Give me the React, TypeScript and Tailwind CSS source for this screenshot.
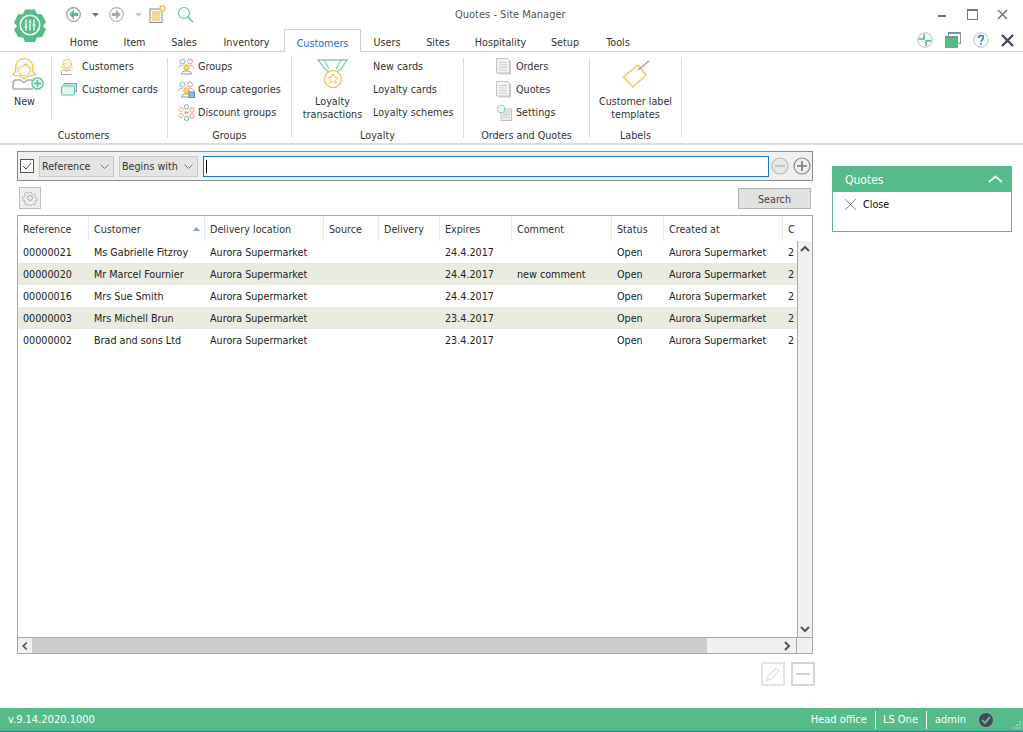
import React from "react";

const Logo = () => (
  <svg width="34" height="34" viewBox="0 0 34 34">
    <path d="M12 1.500h10l2 4.500 5 .5 4 8-3 3.500 3 3.500-4 7.500-5 .5-2 4.500H12l-2-4.500-5-.5-4-7.500 3-3.500-3-3.500 4-8 5-.5z" fill="#55bb8b" />
    <circle cx="17" cy="17" r="10.500" fill="#fff" />
    <circle cx="17" cy="17" r="9" fill="#55bb8b" />
    <path d="M13 11.500v11M17 11.500v11M21 11.500v11" stroke="#fff" strokeWidth="1.300" />
    <path d="M11.500 19h3M15.500 14h3M19.500 17h3" stroke="#fff" strokeWidth="1.700" />
  </svg>
);

const NavBtn = ({ color, dim }: { color: string; dim?: boolean }) => (
  <svg width="15" height="15" viewBox="0 0 16 16">
    <circle cx="8" cy="8" r="7.300" fill="#fff" stroke={dim ? "#b5b5b5" : "#999"} strokeWidth="1.200" />
    <path d="M13 6.300H8.500V3L3.500 8l5 5V9.700H13z" fill={color} transform={dim ? "rotate(180 8 8)" : undefined} />
  </svg>
);

const Caret = ({ c }: { c: string }) => (
  <svg width="7" height="4" viewBox="0 0 7 4"><path d="M0 0h7L3.500 4z" fill={c} /></svg>
);

const Note = () => (
  <svg width="17" height="19" viewBox="0 0 17 19">
    <rect x="1" y="4" width="12" height="13.500" fill="#fff8e6" stroke="#8b8b8b" />
    <path d="M3 7h8M3 9h8M3 11h8M3 13h8M3 15h8" stroke="#e4b24f" />
    <circle cx="13.500" cy="3.500" r="2.500" fill="#fff" stroke="#eec15c" strokeWidth="1.500" />
  </svg>
);

const Search = () => (
  <svg width="17" height="17" viewBox="0 0 17 17" fill="none">
    <circle cx="7" cy="7" r="5.500" stroke="#62c39a" strokeWidth="1.200" />
    <path d="M11 11l5 5" stroke="#62c39a" strokeWidth="1.400" />
  </svg>
);

const Woman = ({ size, sw = 1.200 }: { size: number; sw?: number }) => (
  <svg width={size} height={size} viewBox="0 0 32 32" fill="none">
    <path d="M12 .7C6.500.7 3.500 4.500 3.800 9.500 4 13 2.800 15 1 16.500c2 1.500 4.500 1.500 6.500 1 1.500 2.200 3 3.200 4.500 3.200s3.500-1 4.800-3.200c2 .5 4.500.5 6.700-1-1.800-1.500-3-3.500-2.800-7C21 4.500 17.500.7 12 .7z" stroke="#f2bf4e" strokeWidth={sw} fill="#fff" />
    <path d="M5.500 10C9 10 12 8.500 13.500 5.500 14.500 8 16.500 9.500 18.800 10M5.500 10c0 4 3 8 6.500 8s6.800-4 6.800-8" stroke="#f2bf4e" strokeWidth={sw * 0.9} />
    <path d="M1 31v-5.500c0-2.500 1.500-3.500 3.500-3.500h3.500l4 2.500 4-2.500h4" stroke="#a8a8a8" strokeWidth={sw + 0.2} />
    <path d="M1 31h20" stroke="#a8a8a8" strokeWidth={sw + 0.2} />
  </svg>
);

const NewIcon = () => (
  <div className="relative h-[32px] w-[31px]">
    <Woman size={32} />
    <svg width="13" height="13" viewBox="0 0 13 13" className="absolute bottom-[0px] right-[-1px]">
      <circle cx="6.500" cy="6.500" r="5.600" fill="#e4f6ee" stroke="#55bb8b" strokeWidth="1.300" />
      <path d="M3 6.500h7M6.500 3v7" stroke="#55bb8b" strokeWidth="1.400" />
    </svg>
  </div>
);

const Card = () => (
  <svg width="16" height="13" viewBox="0 0 16 13" fill="none">
    <rect x="3" y="0.500" width="12.500" height="8" fill="#cfe7f1" stroke="#6fa9c0" />
    <rect x="0.500" y="3" width="13" height="9" rx="1" fill="#e2f5ec" stroke="#62c39a" />
  </svg>
);

const People = ({ extra }: { extra?: boolean }) => (
  <svg width="17" height="17" viewBox="0 0 17 17" fill="none">
    <circle cx="4.500" cy="3.500" r="2.500" stroke="#7fb0d3" />
    <circle cx="12" cy="3.500" r="2.500" stroke="#e79393" />
    <path d="M0.500 10c0-2 2-2.500 4-2.500M16 10c0-2-2-2.500-4-2.500" stroke="#aaa" />
    <circle cx="8.500" cy="9.500" r="2.800" fill="#f9d36f" stroke="#e6b33e" />
    <path d="M3.500 16c0-2 2-3 5-3s5 1 5 3z" fill="#fff" stroke="#999" />
    {extra && <rect x="11" y="11" width="5.500" height="5.500" fill="#8fb9d6" stroke="#5d90b3" />}
  </svg>
);

const Discount = () => (
  <svg width="17" height="17" viewBox="0 0 17 17" fill="none">
    <circle cx="8.500" cy="2.800" r="2.200" stroke="#7fb0d3" />
    <circle cx="14" cy="6" r="2.200" stroke="#e79393" />
    <circle cx="14" cy="12" r="2.200" stroke="#e79393" />
    <circle cx="8.500" cy="14.500" r="2.200" stroke="#62c39a" />
    <circle cx="3" cy="11.500" r="2.200" stroke="#f4c55b" />
    <circle cx="3" cy="5.500" r="2.200" stroke="#f4c55b" />
    <path d="M6.500 8.500h4" stroke="#aaa" strokeWidth="2" />
  </svg>
);

const Medal = () => (
  <svg width="32" height="32" viewBox="0 0 32 32" fill="none">
    <path d="M1 1h29l-6 9-8 6-8-6z" stroke="#7ed0ac" strokeWidth="1.300" />
    <path d="M7 1l5 9M24 1l-5 9" stroke="#7ed0ac" strokeWidth="1.100" />
    <circle cx="16" cy="20" r="8.500" fill="#fff" stroke="#f4c55b" strokeWidth="1.300" />
    <path d="M16 15l1.500 3.200 3.500.4-2.600 2.300.8 3.400-3.200-1.800-3.200 1.800.8-3.400-2.600-2.300 3.500-.4z" stroke="#f4c55b" />
  </svg>
);

const Doc = () => (
  <svg width="16" height="17" viewBox="0 0 16 17" fill="none">
    <path d="M2 2.500h13v14H3z" fill="#cfcfcf" />
    <path d="M.5.500h11.500l1.500 2v12.500H.5z" fill="#f2f2f2" stroke="#c4c4c4" />
    <path d="M3 4.500h8M3 7h8M3 9.500h8M3 12h8" stroke="#cfcfcf" />
  </svg>
);

const DocGear = () => (
  <svg width="16" height="17" viewBox="0 0 16 17" fill="none">
    <rect x="5" y="5" width="10.500" height="11.500" fill="#ececec" stroke="#c4c4c4" />
    <path d="M7 8h7M7 10.500h7M7 13h7" stroke="#c9c9c9" />
    <circle cx="5" cy="5" r="3.800" fill="#dff5ea" stroke="#62c39a" strokeDasharray="2 1" />
  </svg>
);

const Tag = () => (
  <svg width="28" height="28" viewBox="0 0 28 28" fill="none">
    <path d="M16 5l8 10-13 12L1.500 17z" stroke="#f4c55b" strokeWidth="1.500" strokeLinejoin="round" />
    <path d="M16 10L27 1" stroke="#9a9a9a" strokeWidth="1.200" />
  </svg>
);

const SmallItem = ({ icon, label, w }: { icon?: React.ReactNode; label: string; w?: string }) => (
  <div className="flex h-[23px] items-center">
    {icon && <span className={`flex items-center justify-center ${w ?? "w-[20px]"}`}>{icon}</span>}
    <span className="whitespace-nowrap pt-[2px]">{label}</span>
  </div>
);

const Group = ({ w, label, children }: { w: string; label: string; children: React.ReactNode }) => (
  <div className={`flex h-[80px] flex-col border-r border-[#d9d9d9] ${w}`}>
    <div className="flex flex-1">{children}</div>
    <div className="mb-[-5px] text-center leading-[14px] text-[#333]">{label}</div>
  </div>
);

const tabs: [string, string][] = [
  ["Home", "w-[52px]"], ["Item", "w-[49px]"], ["Sales", "w-[50px]"], ["Inventory", "w-[75px]"], ["Customers", "w-[77px]"],
  ["Users", "w-[52px]"], ["Sites", "w-[50px]"], ["Hospitality", "w-[75px]"], ["Setup", "w-[54px]"], ["Tools", "w-[52px]"],
];

const cols: [string, string][] = [
  ["Reference", "w-[71px]"], ["Customer", "w-[116px]"], ["Delivery location", "w-[119px]"], ["Source", "w-[55px]"], ["Delivery", "w-[61px]"],
  ["Expires", "w-[72px]"], ["Comment", "w-[100px]"], ["Status", "w-[52px]"], ["Created at", "w-[119px]"], ["C", "w-[14px]"],
];

const rows = [
  ["00000021", "Ms Gabrielle Fitzroy", "24.4.2017", "", "2"],
  ["00000020", "Mr Marcel Fournier", "24.4.2017", "new comment", "2"],
  ["00000016", "Mrs Sue Smith", "24.4.2017", "", "2"],
  ["00000003", "Mrs Michell Brun", "23.4.2017", "", "2"],
  ["00000002", "Brad and sons Ltd", "23.4.2017", "", "2"],
];

const Chev = ({ d }: { d: string }) => (
  <svg width="16" height="16" viewBox="0 0 16 16"><path d={d} fill="none" stroke="#555" strokeWidth="2" /></svg>
);

const Select = ({ label, w }: { label: string; w: string }) => (
  <div className={`flex h-[21px] items-center justify-between border border-[#c8c8c8] bg-[#e4e4e4] px-[2px] ${w}`}>
    <span className="pt-[2px]">{label}</span>
    <svg width="9" height="5" viewBox="0 0 9 5" className="mr-[2px]"><path d="M.5.500l4 4 4-4" fill="none" stroke="#777" /></svg>
  </div>
);

export default function App() {
  return (
    <div className="flex h-[732px] w-[1023px] flex-col overflow-hidden bg-white text-[10.7px] text-[#333] [font-family:'DejaVu_Sans_Condensed','Liberation_Sans',sans-serif]">
      {/* Header */}
      <div className="flex h-[52px] border-b border-[#d0d0d0]">
        <div className="flex w-[58px] justify-start pl-[13px] pt-[8px]"><Logo /></div>
        <div className="flex flex-1 flex-col">
          <div className="flex h-[30px] items-start">
            <div className="flex w-[397px] items-center pl-[8px] pt-[5px]">
              <NavBtn color="#55bb8b" />
              <span className="ml-[11px]"><Caret c="#777" /></span>
              <span className="ml-[10px]"><NavBtn color="#aaa" dim /></span>
              <span className="ml-[11px]"><Caret c="#ccc" /></span>
              <span className="ml-[7px]"><Note /></span>
              <span className="ml-[11px]"><Search /></span>
            </div>
            <div className="pt-[7px] text-[11px] text-[#555]">Quotes - Site Manager</div>
            <div className="ml-auto flex items-center gap-[19px] pr-[15px] pt-[9px]">
              <svg width="11" height="2" className="mt-[2px]"><rect width="8" height="2" x="1" fill="#777" /></svg>
              <svg width="11" height="11"><rect x="0.500" y="0.500" width="10" height="10" fill="none" stroke="#777" /><rect width="11" height="2" fill="#777" /></svg>
              <svg width="11" height="11"><path d="M1 1l9 9M10 1l-9 9" stroke="#777" strokeWidth="1.600" /></svg>
            </div>
          </div>
          <div className="flex h-[22px] items-end">
            {tabs.map(([t, w]) => (
              <div key={t} className={`flex items-center justify-center pt-[6px] ${w} ${t === "Customers" ? "mb-[-1px] h-[23px] border border-b-0 border-[#d0d0d0] bg-white text-[#1a75c4]" : "h-[22px]"}`}>{t}</div>
            ))}
            <div className="ml-auto flex items-center pb-[3px] pr-[9px]">
              <svg width="16" height="16" viewBox="0 0 16 16" fill="none" className="mr-[12px]">
                <circle cx="8" cy="8" r="7.200" stroke="#bbb" />
                <path d="M7 2v5H2M9 14V9h5" stroke="#6fcba4" strokeWidth="2" />
              </svg>
              <svg width="16" height="16" viewBox="0 0 16 16" className="mr-[12px]">
                <rect x="3.500" y="0.500" width="12" height="11" fill="#fff" stroke="#8a9aa5" />
                <rect x="3" y="0" width="13" height="2" fill="#6d97ad" />
                <rect x="0" y="5" width="13" height="11" fill="#55bb8b" />
                <rect x="0" y="4" width="13" height="2" fill="#888" />
              </svg>
              <svg width="16" height="16" viewBox="0 0 16 16" fill="none" className="mr-[12px]">
                <circle cx="8" cy="8" r="7.200" stroke="#bbb" />
                <path d="M5.500 6c0-1.500 1-2.500 2.500-2.500s2.500 1 2.500 2.300c0 2-2.500 2-2.500 4" stroke="#1f7fa8" strokeWidth="1.500" />
                <rect x="7.200" y="11" width="1.600" height="1.800" fill="#1f7fa8" />
              </svg>
              <svg width="13" height="13" viewBox="0 0 13 13"><path d="M1 1l11 11M12 1L1 12" stroke="#3f4b57" strokeWidth="2.400" /></svg>
            </div>
          </div>
        </div>
      </div>

      {/* Ribbon */}
      <div className="flex h-[93px] shrink-0 border-b-2 border-[#dcdcdc] pt-[6px]">
        <Group w="w-[168px]" label="Customers">
          <div className="flex h-[60px] w-[52px] flex-col items-start border-r border-[#d9d9d9] pl-[12px]">
            <NewIcon />
            <span className="ml-[2px] mt-[5px] leading-[14px]">New</span>
          </div>
          <div className="mt-[-3px] pl-[9px]">
            <SmallItem icon={<Woman size={16} sw={1.800} />} label="Customers" w="w-[21px] justify-start" />
            <SmallItem icon={<Card />} label="Customer cards" w="w-[21px] justify-start" />
          </div>
        </Group>
        <Group w="w-[124px]" label="Groups">
          <div className="mt-[-3px] pl-[10px]">
            <SmallItem icon={<People />} label="Groups" w="w-[20px] justify-start" />
            <SmallItem icon={<People extra />} label="Group categories" w="w-[20px] justify-start" />
            <SmallItem icon={<Discount />} label="Discount groups" w="w-[20px] justify-start" />
          </div>
        </Group>
        <Group w="w-[172px]" label="Loyalty">
          <div className="flex w-[81px] flex-col items-center pt-[1px]">
            <Medal />
            <div className="mt-[4px] text-center leading-[13px]">Loyalty<br />transactions</div>
          </div>
          <div className="mt-[-3px]">
            <SmallItem label="New cards" />
            <SmallItem label="Loyalty cards" />
            <SmallItem label="Loyalty schemes" />
          </div>
        </Group>
        <Group w="w-[126px]" label="Orders and Quotes">
          <div className="mt-[-3px] pl-[32px]">
            <SmallItem icon={<Doc />} label="Orders" w="w-[20px] justify-start" />
            <SmallItem icon={<Doc />} label="Quotes" w="w-[20px] justify-start" />
            <SmallItem icon={<DocGear />} label="Settings" w="w-[20px] justify-start" />
          </div>
        </Group>
        <Group w="w-[92px]" label="Labels">
          <div className="flex w-full flex-col items-center pt-[2px]">
            <Tag />
            <div className="mt-[7px] text-center leading-[13px]">Customer label<br />templates</div>
          </div>
        </Group>
      </div>

      {/* Body */}
      <div className="flex flex-1">
        <div className="ml-[17px] mt-[6px] flex w-[798px] flex-col">
          <div className="flex h-[30px] w-[796px] items-center border border-[#8a8a8a] bg-[#f0f0f0] pl-[2px]">
            <span className="flex h-[14px] w-[14px] items-center justify-center border border-[#555] bg-white">
              <svg width="10" height="8" viewBox="0 0 10 8"><path d="M1 4l3 3 5-6" fill="none" stroke="#444" strokeWidth="1" /></svg>
            </span>
            <Select label="Reference" w="ml-[5px] w-[75px]" />
            <Select label="Begins with" w="ml-[5px] w-[79px]" />
            <div className="ml-[5px] flex h-[21px] w-[566px] items-center border border-[#1a75c4] bg-white pl-[2px]">
              <span className="h-[13px] w-px bg-black" />
            </div>
            <svg width="18" height="18" viewBox="0 0 18 18" fill="none" className="ml-[2px]"><circle cx="9" cy="9" r="8" fill="#e8e8e8" stroke="#bbb" strokeWidth="1.200" /><path d="M4 9h10" stroke="#bbb" strokeWidth="1.600" /></svg>
            <svg width="18" height="18" viewBox="0 0 18 18" fill="none" className="ml-[4px]"><circle cx="9" cy="9" r="8" fill="#efefef" stroke="#888" strokeWidth="1.200" /><path d="M4 9h10M9 4v10" stroke="#777" strokeWidth="1.600" /></svg>
          </div>
          <div className="flex h-[34px] w-[794px] items-center justify-between pl-[2px]">
            <div className="flex h-[22px] w-[22px] items-center justify-center border border-[#bcbcbc] bg-[#eeeeee]">
              <svg width="16" height="16" viewBox="0 0 16 16" fill="none">
                <circle cx="8" cy="8" r="2.500" stroke="#aaa" />
                <path d="M6.800 1h2.400l.4 2 1.700.8 1.800-1 1.600 1.600-1 1.800.8 1.700 2 .4v2.400l-2 .4-.8 1.700 1 1.800-1.600 1.600-1.800-1-1.700.8-.4 2H6.800l-.4-2-1.700-.8-1.800 1-1.600-1.600 1-1.800-.8-1.700-2-.4V6.800l2-.4.800-1.700-1-1.800 1.600-1.600 1.800 1 1.700-.8z" stroke="#aaa" transform="translate(1.300 1.300) scale(.84)" />
              </svg>
            </div>
            <div className="mt-[1px] flex h-[21px] w-[73px] items-center justify-center border border-[#b5b5b5] bg-[#e1e1e1] pt-[3px] text-[#444]">Search</div>
          </div>
          <div className="flex h-[439px] w-[796px] flex-col border border-[#a8a8a8]">
            <div className="flex h-[25px] shrink-0 items-stretch">
              {cols.map(([c, w], i) => (
                <div key={c} className={`relative flex shrink-0 items-center overflow-hidden pl-[5px] pt-[4px] ${w} ${i < 9 ? "border-r border-[#e2ecf5]" : ""}`}>
                  {c}
                  {c === "Customer" && (
                    <svg width="7" height="4" viewBox="0 0 7 4" className="absolute right-[4px] top-[11px]"><path d="M0 4h7L3.500 0z" fill="#7fa6c5" /></svg>
                  )}
                </div>
              ))}
            </div>
            <div className="flex flex-1 overflow-hidden">
              <div className="flex w-[779px] flex-col overflow-hidden">
                {rows.map((r, i) => (
                  <div key={r[0]} className={`flex h-[22px] shrink-0 items-center whitespace-nowrap pt-[2px] text-[#222] ${i % 2 ? "bg-[#e9ebe1]" : "bg-white"}`}>
                    <span className="w-[71px] shrink-0 pl-[5px]">{r[0]}</span>
                    <span className="w-[116px] shrink-0 pl-[5px]">{r[1]}</span>
                    <span className="w-[119px] shrink-0 pl-[5px]">Aurora Supermarket</span>
                    <span className="w-[116px] shrink-0" />
                    <span className="w-[72px] shrink-0 pl-[5px]">{r[2]}</span>
                    <span className="w-[100px] shrink-0 pl-[5px]">{r[3]}</span>
                    <span className="w-[52px] shrink-0 pl-[5px]">Open</span>
                    <span className="w-[119px] shrink-0 pl-[5px]">Aurora Supermarket</span>
                    <span className="w-[14px] shrink-0 pl-[5px]">{r[4]}</span>
                  </div>
                ))}
              </div>
              <div className="mt-[-2px] flex w-[15px] flex-col items-center border-l border-t border-[#a8a8a8] bg-[#f0f0f0] pt-[1px]">
                <Chev d="M4 10l4-4 4 4" />
                <div className="flex-1" />
                <Chev d="M4 6l4 4 4-4" />
              </div>
            </div>
            <div className="flex h-[16px] shrink-0 border-t border-[#a8a8a8] bg-[#f0f0f0]">
              <div className="flex w-[14px] items-center justify-center"><Chev d="M10 4L6 8l4 4" /></div>
              <div className="w-[675px] bg-[#cdcdcd]" />
              <div className="flex flex-1 items-center justify-end pr-[1px]"><Chev d="M6 4l4 4-4 4" /></div>
              <div className="w-[16px] border-l border-[#a8a8a8]" />
            </div>
          </div>
          <div className="mt-[8px] flex w-[798px] justify-end gap-[6px]">
            <div className="flex h-[24px] w-[24px] items-center justify-center border-2 border-[#e4e4e4]">
              <svg width="16" height="16" viewBox="0 0 16 16" fill="none"><path d="M1.500 14.500l1-4L11 2l3 3-8.500 8.500z" stroke="#d2d2d2" /></svg>
            </div>
            <div className="flex h-[24px] w-[24px] items-center justify-center border-2 border-[#d6d6d6]">
              <div className="h-[2px] w-[14px] bg-[#cfcfcf]" />
            </div>
          </div>
        </div>
        <div className="ml-[17px] mt-[21px] h-[66px] w-[180px]">
          <div className="flex h-[26px] items-center justify-between bg-[#55bb8b] pl-[13px] pr-[9px] text-[12px] text-white">
            <span className="pt-[2px]">Quotes</span>
            <svg width="15" height="8" viewBox="0 0 15 8"><path d="M1 7l6.500-5.500L14 7" fill="none" stroke="#fff" strokeWidth="2" /></svg>
          </div>
          <div className="flex h-[40px] items-start border border-t-0 border-[#55bb8b] pl-[11px] pt-[5px] text-[#111]">
            <svg width="13" height="13" viewBox="0 0 13 13" className="mt-[1px]"><path d="M1 1l11 11M12 1L1 12" stroke="#8a8a8a" strokeWidth="1" /></svg>
            <span className="ml-[6px]">Close</span>
          </div>
        </div>
      </div>

      {/* Status bar */}
      <div className="relative flex h-[24px] shrink-0 items-center border-b border-[#1a75c4] bg-[#55bb8b] pl-[8px] text-[11px] text-white">
        <span className="pt-[2px]">v.9.14.2020.1000</span>
        <div className="ml-auto flex items-center">
          <span className="pt-[2px]">Head office</span>
          <span className="ml-[8px] mr-[7px] h-[18px] w-px bg-white" />
          <span className="pt-[2px]">LS One</span>
          <span className="mx-[8px] h-[18px] w-px bg-white" />
          <span className="pt-[2px]">admin</span>
          <svg width="16" height="16" viewBox="0 0 16 16" className="ml-[12px] mr-[29px]">
            <circle cx="8" cy="8" r="7.500" fill="#3f4b57" stroke="#9aa5ab" />
            <path d="M4 8l3 3 5-6" fill="none" stroke="#55bb8b" strokeWidth="2" />
          </svg>
        </div>
        <svg width="8" height="8" viewBox="0 0 8 8" className="absolute bottom-[2px] right-[2px]" fill="#8fcfb1">
          <path d="M6 0h2v2H6zM3 3h2v2H3zM6 3h2v2H6zM0 6h2v2H0zM3 6h2v2H3zM6 6h2v2H6z" />
        </svg>
      </div>
    </div>
  );
}
